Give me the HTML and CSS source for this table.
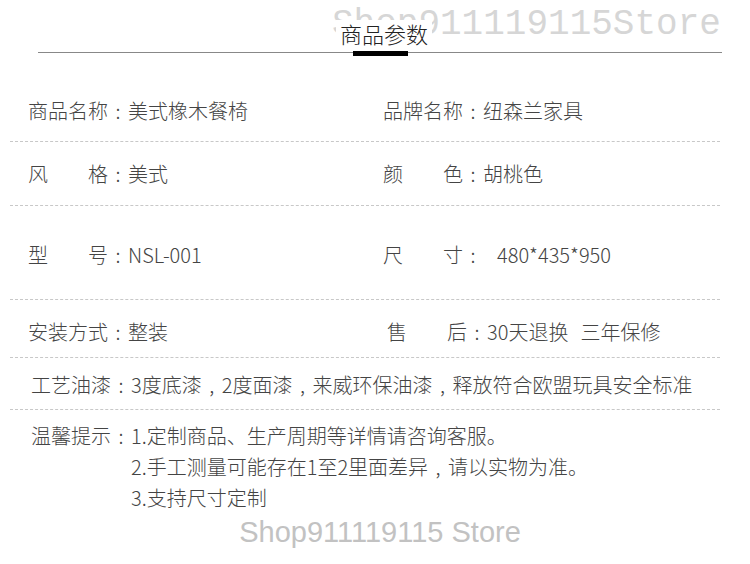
FILE: index.html
```html
<!DOCTYPE html>
<html lang="zh-CN">
<head>
  <meta charset="UTF-8" />
  <meta name="viewport" content="width=device-width, initial-scale=1.0"/>
  <title>商品参数</title>
  <link rel="stylesheet" href="styles.css">
</head>
<body>
  <div class="head">
    <div class="mark-top">Shop911119115Store</div>
    <div class="title"><span>商品参数</span></div>
    <div class="rule"></div>
    <div class="bar"></div>
  </div>

  <div class="params">
    <div class="row r1">
      <div class="cell">商品名称<span class="cn">:</span>美式橡木餐椅</div>
      <div class="cell">品牌名称<span class="cn">:</span>纽森兰家具</div>
    </div>
    <div class="row r2">
      <div class="cell">风　　格<span class="cn">:</span>美式</div>
      <div class="cell">颜　　色<span class="cn">:</span>胡桃色</div>
    </div>
    <div class="row r3">
      <div class="cell">型　　号<span class="cn">:</span>NSL-001</div>
      <div class="cell">尺　　寸<span class="cn">:</span><span class="size">480*435*950</span></div>
    </div>
    <div class="row r4">
      <div class="cell">安装方式<span class="cn">:</span>整装</div>
      <div class="cell shift">售　　后<span class="cn">:</span>30天退换<span class="gap">三年保修</span></div>
    </div>
    <div class="row r5 wide">
      <div class="cell">工艺油漆<span class="cn">:</span>3度底漆<span class="cm">,</span>2度面漆<span class="cm">,</span>来威环保油漆<span class="cm">,</span>释放符合欧盟玩具安全标准</div>
    </div>
    <div class="tips">
      <div class="tips-label">温馨提示<span class="cn">:</span></div>
      <div class="tips-list">
        <div>1.定制商品、生产周期等详情请咨询客服。</div>
        <div>2.手工测量可能存在1至2里面差异<span class="cm">,</span>请以实物为准。</div>
        <div>3.支持尺寸定制</div>
      </div>
    </div>
  </div>

  <div class="mark-bottom">Shop911119115 Store</div>
</body>
</html>
```

FILE: styles.css
```css
body {
  margin: 0;
  background: #fff;
  font-family: "Noto Sans CJK SC", "Noto Sans", sans-serif;
  font-weight: 300;
  color: #444;
}
.head {
  position: relative;
  margin: 0 28px 0 38px;
  padding-top: 20px;
}
.mark-top {
  position: absolute;
  top: 7px;
  left: 294px;
  font-family: "Liberation Mono", monospace;
  font-size: 36px;
  line-height: 36px;
  color: #d6d6d6;
  white-space: nowrap;
}
.title {
  position: relative;
  text-align: center;
  font-size: 22px;
  line-height: 26px;
  color: #222;
}
.title span {
  display: inline-block;
  background: #fff;
  padding: 0 4px;
  margin-left: 8px;
}
.rule {
  margin-top: 6px;
  border-top: 1px solid #888;
}
.bar {
  width: 55px;
  height: 5px;
  margin: -2px auto 0;
  background: #000;
}
.params {
  margin: 25px 30px 0 10px;
}
.row {
  display: grid;
  grid-template-columns: 355px 1fr;
  padding-left: 18px;
  font-size: 20px;
  line-height: 30px;
  border-bottom: 1px dashed #c8c8c8;
  white-space: nowrap;
}
.r1 { padding-top: 15px; padding-bottom: 15px; }
.r2 { padding-top: 17px; padding-bottom: 16px; }
.r3 { padding-top: 34px; padding-bottom: 29px; }
.r4 { padding-top: 17px; padding-bottom: 10px; }
.r5 { padding-top: 12px; padding-bottom: 9px; }
.wide {
  grid-template-columns: 1fr;
  padding-left: 21px;
}
.cn,
.cm {
  display: inline-block;
  width: 20px;
  text-align: center;
}
.shift {
  padding-left: 4px;
}
.size {
  margin-left: 14px;
}
.gap {
  margin-left: 12px;
}
.tips {
  display: flex;
  padding: 10px 0 0 21px;
  font-size: 20px;
  line-height: 31px;
  white-space: nowrap;
}
.tips-label {
  width: 100px;
  flex-shrink: 0;
}
.mark-bottom {
  margin: 0 0 0 10px;
  padding-top: 2px;
  text-align: center;
  font-family: "Liberation Sans", Arial, sans-serif;
  font-size: 29px;
  line-height: 34px;
  color: #c2c2c2;
}
```
